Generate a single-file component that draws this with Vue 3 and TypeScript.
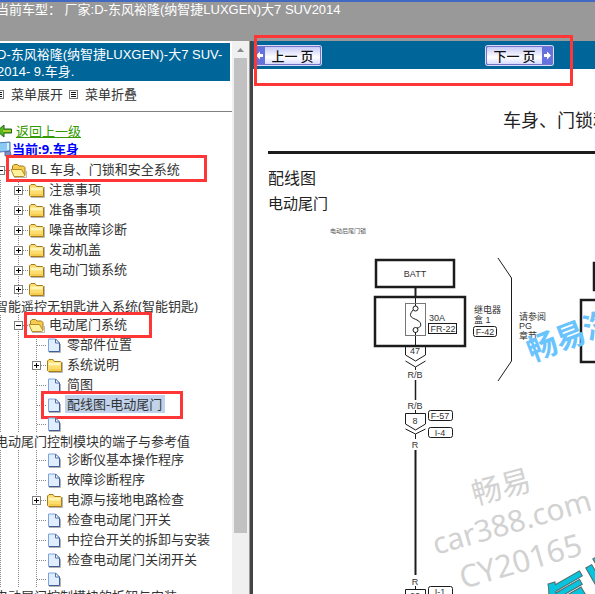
<script setup lang="ts">
import { ref } from 'vue'

type Kind = 'open' | 'folder' | 'page'

interface TreeNode {
  level: number
  kind: Kind
  label: string
  toggle?: '+' | '-'
  wrapped?: boolean
  mark?: 'system' | 'gate' | 'diagram'
}

const nodes: TreeNode[] = [
  { level: 0, kind: 'open', toggle: '-', label: 'BL 车身、门锁和安全系统', mark: 'system' },
  { level: 1, kind: 'folder', toggle: '+', label: '注意事项' },
  { level: 1, kind: 'folder', toggle: '+', label: '准备事项' },
  { level: 1, kind: 'folder', toggle: '+', label: '噪音故障诊断' },
  { level: 1, kind: 'folder', toggle: '+', label: '发动机盖' },
  { level: 1, kind: 'folder', toggle: '+', label: '电动门锁系统' },
  { level: 1, kind: 'folder', toggle: '+', label: '智能遥控无钥匙进入系统(智能钥匙)', wrapped: true },
  { level: 1, kind: 'open', toggle: '-', label: '电动尾门系统', mark: 'gate' },
  { level: 2, kind: 'page', label: '零部件位置' },
  { level: 2, kind: 'folder', toggle: '+', label: '系统说明' },
  { level: 2, kind: 'page', label: '简图' },
  { level: 2, kind: 'page', label: '配线图-电动尾门', mark: 'diagram' },
  { level: 2, kind: 'page', label: '电动尾门控制模块的端子与参考值', wrapped: true },
  { level: 2, kind: 'page', label: '诊断仪基本操作程序' },
  { level: 2, kind: 'page', label: '故障诊断程序' },
  { level: 2, kind: 'folder', toggle: '+', label: '电源与接地电路检查' },
  { level: 2, kind: 'page', label: '检查电动尾门开关' },
  { level: 2, kind: 'page', label: '中控台开关的拆卸与安装' },
  { level: 2, kind: 'page', label: '检查电动尾门关闭开关' },
  { level: 2, kind: 'page', label: '电动尾门控制模块的拆卸与安装', wrapped: true },
]

const selected = ref('配线图-电动尾门')
</script>

<template>
  <div class="app">
    <header class="banner">当前车型： 厂家:D-东风裕隆(纳智捷LUXGEN)大7 SUV2014</header>

    <div class="frames">
      <aside class="side">
        <div class="scroller">
          <h1 class="title"><span>D-东风裕隆(纳智捷LUXGEN)-大7 SUV-</span> <span>2014- 9.车身.</span></h1>
          <div class="actions">
            <button type="button" class="action"><i class="list-icon"></i>菜单展开</button>
            <button type="button" class="action"><i class="list-icon"></i>菜单折叠</button>
          </div>
          <nav class="tree">
            <a href="#up" class="up">
              <svg width="16" height="16" viewBox="0 0 16 16" aria-hidden="true">
                <path d="M1 8 L8 2 V6 H15.500 V10 H8 V14 Z" fill="#55b520" stroke="#1f6410" />
                <path d="M7 8 H15" stroke="#c8d92c" stroke-width="1.500" />
              </svg>
              <span>返回上一级</span>
            </a>
            <div class="current">
              <svg width="16" height="16" viewBox="0 0 16 16" aria-hidden="true">
                <path d="M1 2 L14 1 L14 10 L4 11 Z" fill="#8cc9f5" stroke="#4b78ba" />
                <path d="M11 2 L13 2 L13 9 L11 9 Z" fill="#d9f0ff" />
                <path d="M9 11 L14 10 L15 14 L9 15 Z" fill="#8290c8" stroke="#5967a5" />
              </svg>
              <span>当前:9.车身</span>
            </div>
            <ul>
              <li v-for="node in nodes" :key="node.label" :class="{ wrapped: node.wrapped }">
                <div class="row">
                  <i v-for="n in node.level" :key="n" class="guide"></i>
                  <span class="branch" :class="{ guide: node.level > 0 }">
                    <button v-if="node.toggle" type="button" class="toggle" :class="{ plus: node.toggle === '+' }" :aria-label="node.label"></button>
                  </span>
                  <svg v-if="node.kind === 'folder'" class="icon" width="18" height="18" viewBox="0 0 18 18" aria-hidden="true">
                    <path d="M3 16.500 H16.500 V6" fill="none" stroke="#b8b8b8" />
                    <path d="M1.500 5 L3 3.500 H7 L8.500 5.500 H14.500 L15.500 6.500 V15.500 H2.500 L1.500 14.500 Z" fill="#fbdc6c" stroke="#a67b1c" />
                    <path d="M2.500 8 H14.500" stroke="#fff5b5" stroke-width="3" />
                    <path d="M3 14 H14.500" stroke="#eebb35" />
                  </svg>
                  <svg v-else-if="node.kind === 'open'" class="icon" width="18" height="18" viewBox="0 0 18 18" aria-hidden="true">
                    <path d="M4 16.500 H16.500 V10" fill="none" stroke="#b8b8b8" />
                    <path d="M2.500 8 V5 L4 3.500 H7.500 L9 5 H13.500 L15 6.500 V14 L13 15 H4 Z" fill="#f5cc50" stroke="#a67b1c" />
                    <path d="M1 8.500 H11.500 L15 14.500 L13.500 15.500 H4 Z" fill="#fff09c" stroke="#b88c24" />
                  </svg>
                  <svg v-else class="icon" width="18" height="18" viewBox="0 0 18 18" aria-hidden="true">
                    <path d="M3 16.500 H14.500 V8" fill="none" stroke="#b4b4b4" />
                    <path d="M2.500 3 H9.500 L13.500 7 V15.500 H2.500 Z" fill="#e0eeff" stroke="#7fa3dc" />
                    <path d="M9.500 3 V7 H13.500 Z" fill="#ffffff" stroke="#4d6fac" />
                    <path d="M13.500 7 V15.500 H3" fill="none" stroke="#3e5e9e" />
                  </svg>
                  <a v-if="!node.wrapped" href="#node" class="label" :class="{ selected: node.label === selected }" @click.prevent="selected = node.label">{{ node.label }}</a>
                  <i v-if="node.mark" class="mark" :class="node.mark"></i>
                </div>
                <a v-if="node.wrapped" href="#node" class="long" @click.prevent="selected = node.label">{{ node.label }}</a>
              </li>
            </ul>
          </nav>
        </div>
        <div class="scrollbar" aria-hidden="true">
          <i class="arrow"></i>
          <i class="thumb"></i>
          <i class="rest"></i>
        </div>
      </aside>

      <main class="content">
        <div class="toolbar">
          <button type="button" class="pager prev">
            <svg width="9" height="17" viewBox="0 0 9 17" aria-hidden="true">
              <path d="M0 8.500 L4 4.500 V7 H7 V10 H4 V12.500 Z" fill="#fff" />
            </svg>
            <span>上一 页</span>
          </button>
          <button type="button" class="pager next">
            <span>下一 页</span>
            <svg width="10" height="17" viewBox="0 0 10 17" aria-hidden="true">
              <path d="M9 8.500 L5 4.500 V7 H2 V10 H5 V12.500 Z" fill="#fff" />
            </svg>
          </button>
          <i class="mark pages"></i>
        </div>

        <article class="sheet">
          <p class="chapter">车身、门锁和</p>
          <h2>配线图</h2>
          <h3>电动尾门</h3>
          <p class="caption">电动后尾门锁</p>
          <svg class="wiring" width="342" height="354" viewBox="253 240 342 354" role="img" aria-label="配线图">
            <g fill="none" stroke="#1c1c1c">
              <rect x="376" y="260" width="78" height="27" stroke-width="2.500" />
              <rect x="375" y="297" width="90" height="49" stroke-width="2.500" />
              <path d="M415.500 288 V297" stroke-width="2" />
              <path d="M415.500 297 V306 M415.500 332 V346" />
              <rect x="405.500" y="303.500" width="20" height="32" stroke="#777" />
              <circle cx="415.500" cy="308.500" r="2.500" />
              <circle cx="415.500" cy="330" r="2.500" />
              <path d="M413 310 C407 317 413 318 417 320 C423 323 421 328 417 328" />
              <rect x="428.500" y="323.500" width="28" height="10" />
              <rect x="473.500" y="326.500" width="23" height="10" rx="2" />
              <path d="M405.500 347 V355 L415.500 361 L425.500 355 V347 M405.500 361 L415.500 367 L425.500 361 M415.500 367 V370" />
              <path d="M415.500 380 V400" stroke-width="1.500" />
              <path d="M415.500 410 V414 M405.500 413.500 H425.500 V424 L415.500 430 L405.500 424 Z M405.500 429 L415.500 434 L425.500 429 M415.500 434 V439" />
              <rect x="428.500" y="410.500" width="24" height="10" rx="2" />
              <rect x="428.500" y="427.500" width="24" height="10" rx="2" />
              <path d="M415.500 450 V575" stroke-width="2" />
              <path d="M415.500 586 V590 M405.500 600 V589.500 H425.500 V600" />
              <rect x="428.500" y="586.500" width="24" height="12" rx="2" />
              <path d="M498 258 L511.500 278 V361 L498 381" />
              <path d="M600 263 H594 V290 H600" stroke-width="2.500" />
              <path d="M600 300 H581 V362 H600" stroke-width="2.500" />
            </g>
            <g class="names">
              <text x="415" y="277" text-anchor="middle">BATT</text>
              <text x="429" y="321">30A</text>
              <text x="443" y="332" text-anchor="middle">FR-22</text>
              <text x="485" y="335" text-anchor="middle">F-42</text>
              <text x="415" y="354" text-anchor="middle">47</text>
              <text x="415" y="378" text-anchor="middle">R/B</text>
              <text x="415" y="409" text-anchor="middle">R/B</text>
              <text x="415" y="424" text-anchor="middle">8</text>
              <text x="440" y="419" text-anchor="middle">F-57</text>
              <text x="440" y="436" text-anchor="middle">I-4</text>
              <text x="415" y="448" text-anchor="middle">R</text>
              <text x="415" y="585" text-anchor="middle">R</text>
              <text x="440" y="595" text-anchor="middle">I-1</text>
              <text x="415" y="599" text-anchor="middle">20</text>
              <text x="474" y="313">继电器</text>
              <text x="474" y="323">盒 1</text>
              <text x="519" y="320">请参阅</text>
              <text x="519" y="329">PG</text>
              <text x="519" y="339">章节</text>
            </g>
            <text class="brand" transform="translate(532 362) rotate(-21)">畅易汽</text>
            <g class="watermark">
              <text transform="translate(475 505) rotate(-15)">畅易</text>
              <text transform="translate(436 555) rotate(-16)">car388.com</text>
              <text class="code" transform="translate(463 589) rotate(-16)">CY20165</text>
            </g>
            <text class="stamp" transform="translate(559 625) rotate(-30)">气收</text>
          </svg>
        </article>
      </main>
    </div>
  </div>
</template>

<style>
body {
  margin: 0;
}
</style>

<style scoped>
.app {
  height: 100vh;
  overflow: hidden;
  display: flex;
  flex-direction: column;
  font: 13px/18px "Noto Sans", "Noto Sans CJK SC", sans-serif;
  color: #333;
}
.banner {
  flex: none;
  box-sizing: border-box;
  height: 41px;
  border-top: 2px solid #4169c1;
  background: #999;
  color: #fff;
  font: 13px/16px "Liberation Sans", "Noto Sans CJK SC", sans-serif;
  text-indent: -4px;
  white-space: nowrap;
}
.frames {
  flex: 1;
  min-height: 0;
  display: flex;
}
.side {
  flex: none;
  display: flex;
  width: 249px;
  border-right: 1px solid #999;
  background: #fff;
}
.scroller {
  flex: 1;
  min-width: 0;
  overflow: hidden;
  padding-top: 2px;
}
.title {
  box-sizing: border-box;
  margin: 0 2px 0 -3px;
  padding: 3px 0 1px;
  background: #069;
  color: #fff;
  font: 400 13px/17px "Liberation Sans", "Noto Sans CJK SC", sans-serif;
}
.title span {
  display: block;
  white-space: nowrap;
}
.actions {
  display: flex;
  gap: 6px;
  height: 31px;
  box-sizing: border-box;
  padding-top: 4px;
  margin-left: -5px;
  border-bottom: 1px solid #808080;
}
.action {
  display: flex;
  align-items: center;
  gap: 7px;
  height: 18px;
  padding: 0;
  border: 0;
  background: none;
  color: inherit;
  font: inherit;
}
.list-icon {
  box-sizing: border-box;
  width: 9px;
  height: 9px;
  border: 1px solid #777;
  background: repeating-linear-gradient(#111 0 1px, #fff 1px 2px) content-box;
  padding: 1px;
}
.tree {
  padding-top: 10px;
  margin-left: -9px;
}
.up,
.current {
  display: flex;
  align-items: center;
  gap: 4px;
  height: 18px;
  padding-left: 5px;
}
.up {
  color: #390;
}
.current {
  gap: 0;
  color: #00f;
  font-weight: 700;
}
ul {
  list-style: none;
  margin: 0;
  padding: 2px 0 0;
}
.row {
  position: relative;
  display: flex;
  align-items: center;
  height: 20px;
}
.wrapped .row {
  height: 18px;
}
.guide,
.branch {
  flex: none;
  width: 18px;
  align-self: stretch;
}
.guide {
  background: repeating-linear-gradient(#888 0 1px, transparent 1px 2px) 9px 0 / 1px 100% no-repeat;
}
.branch {
  position: relative;
  display: flex;
  align-items: center;
  justify-content: center;
}
.branch::after {
  content: "";
  position: absolute;
  left: 10px;
  right: -2px;
  top: 50%;
  height: 1px;
  background: repeating-linear-gradient(90deg, #888 0 1px, transparent 1px 2px);
}
.toggle {
  position: relative;
  z-index: 1;
  box-sizing: border-box;
  width: 9px;
  height: 9px;
  margin: 1px 0 0 1px;
  padding: 0;
  border: 1px solid #808080;
  background: linear-gradient(#000, #000) center / 5px 1px no-repeat, #fff;
}
.toggle.plus {
  background: linear-gradient(#000, #000) center / 5px 1px no-repeat,
    linear-gradient(#000, #000) center / 1px 5px no-repeat, #fff;
}
.icon {
  flex: none;
  margin-left: 1px;
}
.label {
  padding: 0 3px 0 2px;
  margin: 0 0 2px 1px;
  color: inherit;
  text-decoration: none;
  white-space: nowrap;
}
.label.selected {
  background: #c0d2ec;
}
.long {
  display: block;
  height: 17px;
  padding-left: 4px;
  line-height: 17px;
  color: inherit;
  text-decoration: none;
  white-space: nowrap;
}
.mark {
  position: absolute;
  box-sizing: border-box;
  border: 3px solid #ff3636;
  pointer-events: none;
}
.system {
  left: 15px;
  top: -5px;
  width: 201px;
  height: 27px;
}
.gate {
  left: 33px;
  top: -3px;
  width: 128px;
  height: 26px;
}
.diagram {
  left: 50px;
  top: -4px;
  width: 142px;
  height: 28px;
}
.scrollbar {
  flex: none;
  width: 17px;
  display: flex;
  flex-direction: column;
  align-items: center;
  background: #f0f0f0;
}
.arrow {
  flex: none;
  width: 7px;
  height: 4px;
  margin: 7px 0 6px;
  background: #8b8b8b;
  clip-path: polygon(50% 0, 100% 100%, 0 100%);
}
.thumb {
  flex: 475;
  width: 13px;
  background: #c1c1c1;
}
.rest {
  flex: 61;
}
.content {
  flex: 1;
  min-width: 0;
  display: flex;
  flex-direction: column;
  border-left: 3px solid #444;
  background: #fff;
}
.toolbar {
  position: relative;
  flex: none;
  box-sizing: border-box;
  display: flex;
  gap: 165px;
  height: 28px;
  padding: 5px 3px 4px;
  background: #069;
}
.pager {
  flex: none;
  box-sizing: border-box;
  display: flex;
  align-items: center;
  height: 19px;
  padding: 0;
  border: 1px solid #7475c9;
  border-radius: 2px;
  background: linear-gradient(#c5c9f6, #fff 60%, #d9dcff);
  box-shadow: 0 0 0 1px #d8daf8;
  color: #111;
  font: 500 13px/16px "Noto Sans CJK SC", sans-serif;
}
.pager svg {
  background: #6571dd;
}
.pager span {
  flex: 1;
  text-align: center;
  white-space: pre;
}
.prev {
  width: 65px;
  border-left: 0;
}
.next {
  width: 67px;
}
.pages {
  left: 1px;
  top: -6px;
  width: 319px;
  height: 51px;
}
.sheet {
  flex: 1;
  overflow: hidden;
  padding: 39px 0 0;
  color: #222;
  font-family: "Liberation Sans", "Noto Sans CJK SC", sans-serif;
}
.chapter {
  margin: 0 0 0 15px;
  padding: 0 0 16px 235px;
  border-bottom: 3px solid #1c1c1c;
  font-size: 18px;
  line-height: 27px;
  white-space: nowrap;
}
h2,
h3 {
  margin: 0 0 0 15px;
  font-weight: 400;
  line-height: 25px;
}
h2 {
  padding-top: 12px;
  font-size: 16px;
}
h3 {
  font-size: 15px;
}
.caption {
  margin: 0;
  padding: 10px 0 4px 77px;
  font-size: 6px;
  line-height: 10px;
  color: #555;
}
.wiring {
  display: block;
  overflow: visible;
}
.names {
  font-size: 9px;
  fill: #333;
}
.brand {
  font: 700 30px "Noto Sans CJK SC", sans-serif;
  fill: #69c3fd;
}
.watermark {
  font: 30px "Noto Sans", "Noto Sans CJK SC", sans-serif;
  fill: #d2d2d2;
}
.code {
  font-size: 31px;
}
.stamp {
  font: 900 48px "Noto Sans CJK SC", sans-serif;
  fill: #08c4dc;
  stroke: #55686a;
  stroke-width: 1px;
}
</style>
